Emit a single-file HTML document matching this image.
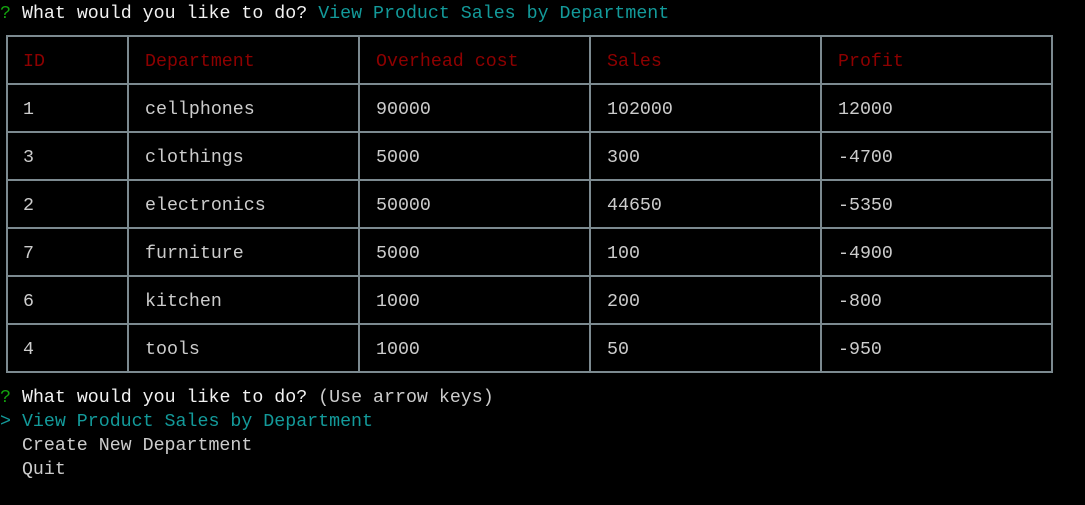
<!DOCTYPE html>
<html><head><style>
body{margin:0;background:#000;width:1085px;height:505px;overflow:hidden;position:relative;font-family:"Liberation Mono",monospace;font-size:18.3px;color:#cccccc}
.t{position:absolute;white-space:pre;line-height:24px;margin-top:2px}
.h{position:absolute;background:#7c8a90}
.r{color:#8e0000}
.c{color:#139a9a}
.g{color:#13a10e}
.w{color:#f2f2f2}
</style></head><body>
<div class="t" style="left:0;top:0"><span class="g">?</span> <span class="w">What would you like to do?</span> <span class="c">View Product Sales by Department</span></div>
<div class="h" style="left:7px;top:35px;width:1046px;height:2px"></div>
<div class="h" style="left:7px;top:83px;width:1046px;height:2px"></div>
<div class="h" style="left:7px;top:131px;width:1046px;height:2px"></div>
<div class="h" style="left:7px;top:179px;width:1046px;height:2px"></div>
<div class="h" style="left:7px;top:227px;width:1046px;height:2px"></div>
<div class="h" style="left:7px;top:275px;width:1046px;height:2px"></div>
<div class="h" style="left:7px;top:323px;width:1046px;height:2px"></div>
<div class="h" style="left:7px;top:371px;width:1046px;height:2px"></div>
<div class="h" style="left:6px;top:35px;width:2px;height:338px"></div>
<div class="h" style="left:127px;top:35px;width:2px;height:338px"></div>
<div class="h" style="left:358px;top:35px;width:2px;height:338px"></div>
<div class="h" style="left:589px;top:35px;width:2px;height:338px"></div>
<div class="h" style="left:820px;top:35px;width:2px;height:338px"></div>
<div class="h" style="left:1051px;top:35px;width:2px;height:338px"></div>
<div class="t r" style="left:23px;top:48px">ID</div>
<div class="t r" style="left:145px;top:48px">Department</div>
<div class="t r" style="left:376px;top:48px">Overhead cost</div>
<div class="t r" style="left:607px;top:48px">Sales</div>
<div class="t r" style="left:838px;top:48px">Profit</div>
<div class="t" style="left:23px;top:96px">1</div><div class="t" style="left:145px;top:96px">cellphones</div><div class="t" style="left:376px;top:96px">90000</div><div class="t" style="left:607px;top:96px">102000</div><div class="t" style="left:838px;top:96px">12000</div>
<div class="t" style="left:23px;top:144px">3</div><div class="t" style="left:145px;top:144px">clothings</div><div class="t" style="left:376px;top:144px">5000</div><div class="t" style="left:607px;top:144px">300</div><div class="t" style="left:838px;top:144px">-4700</div>
<div class="t" style="left:23px;top:192px">2</div><div class="t" style="left:145px;top:192px">electronics</div><div class="t" style="left:376px;top:192px">50000</div><div class="t" style="left:607px;top:192px">44650</div><div class="t" style="left:838px;top:192px">-5350</div>
<div class="t" style="left:23px;top:240px">7</div><div class="t" style="left:145px;top:240px">furniture</div><div class="t" style="left:376px;top:240px">5000</div><div class="t" style="left:607px;top:240px">100</div><div class="t" style="left:838px;top:240px">-4900</div>
<div class="t" style="left:23px;top:288px">6</div><div class="t" style="left:145px;top:288px">kitchen</div><div class="t" style="left:376px;top:288px">1000</div><div class="t" style="left:607px;top:288px">200</div><div class="t" style="left:838px;top:288px">-800</div>
<div class="t" style="left:23px;top:336px">4</div><div class="t" style="left:145px;top:336px">tools</div><div class="t" style="left:376px;top:336px">1000</div><div class="t" style="left:607px;top:336px">50</div><div class="t" style="left:838px;top:336px">-950</div>
<div class="t" style="left:0;top:384px"><span class="g">?</span> <span class="w">What would you like to do?</span> (Use arrow keys)</div>
<div class="t c" style="left:0;top:408px">&gt; View Product Sales by Department</div>
<div class="t" style="left:0;top:432px">  Create New Department</div>
<div class="t" style="left:0;top:456px">  Quit</div>
</body></html>
